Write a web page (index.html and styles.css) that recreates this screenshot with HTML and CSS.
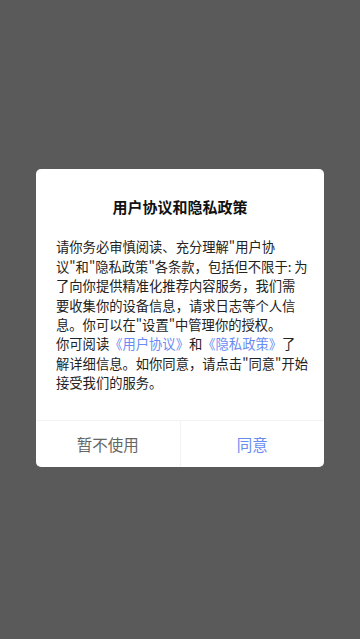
FILE: index.html
```html
<!DOCTYPE html>
<html lang="zh-CN">
<head>
<meta charset="utf-8">
<meta name="viewport" content="width=360">
<link rel="stylesheet" href="styles.css">
</head>
<body>
<div class="overlay">
  <div class="dialog">
    <div class="title">用户协议和隐私政策</div>
    <div class="content">请你务必审慎阅读、充分理解"用户协<br>议"和"隐私政策"各条款，包括但不限于: 为<br>了向你提供精准化推荐内容服务，我们需<br>要收集你的设备信息，请求日志等个人信<br>息。你可以在"设置"中管理你的授权。<br>你可阅读<span class="link">《用户协议》</span>和<span class="link">《隐私政策》</span>了<br>解详细信息。如你同意，请点击"同意"开始<br>接受我们的服务。</div>
    <div class="actions">
      <div class="btn cancel">暂不使用</div>
      <div class="btn ok">同意</div>
    </div>
  </div>
</div>
</body>
</html>
```
FILE: styles.css
```css
html, body {
  margin: 0;
  padding: 0;
}
body {
  width: 360px;
  height: 639px;
  background: #5a5a5a;
  font-family: "Noto Sans CJK SC", "Noto Sans", sans-serif;
}
.overlay {
  height: 639px;
  display: flex;
  align-items: center;
  justify-content: center;
}
.dialog {
  width: 288px;
  margin-top: -3px;
  background: #ffffff;
  border-radius: 5px;
  overflow: hidden;
}
.title {
  padding-top: 28px;
  font-size: 15px;
  line-height: 20px;
  font-weight: 700;
  color: #111111;
  text-align: center;
}
.content {
  padding: 20px 18px 0 20px;
  font-size: 13.3px;
  line-height: 19.4px;
  color: #222222;
  white-space: nowrap;
}
.link {
  color: #6a8cf2;
}
.actions {
  margin-top: 27px;
  display: flex;
  border-top: 1px solid #f2f2f2;
  height: 46px;
}
.btn {
  flex: 1;
  display: flex;
  align-items: center;
  justify-content: center;
  font-size: 15.5px;
}
.cancel {
  color: #666666;
  border-right: 1px solid #f2f2f2;
}
.ok {
  color: #6a8cf2;
}
```
